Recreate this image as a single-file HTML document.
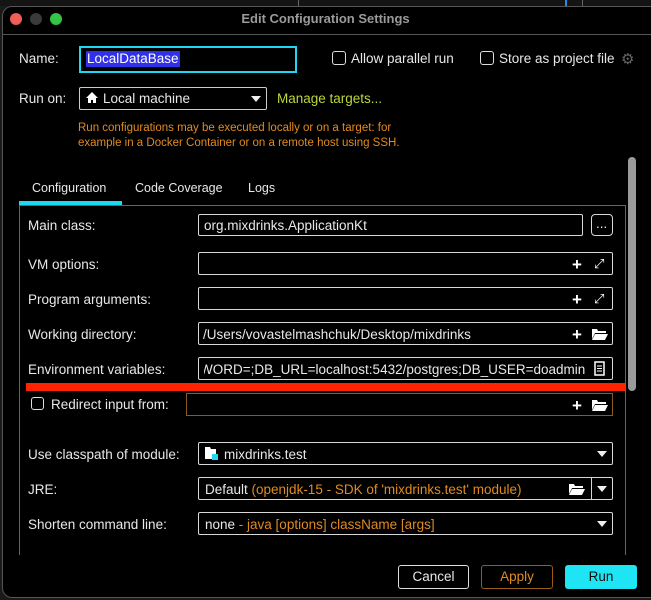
<!DOCTYPE html>
<html><head><meta charset="utf-8"><style>
*{box-sizing:border-box;margin:0;padding:0}
body{width:651px;height:600px;background:#1a1a1a;position:relative;overflow:hidden;font-family:"Liberation Sans",Arial,sans-serif;font-size:13.5px;color:#e8e8e8}
.a{position:absolute;white-space:nowrap}
.win{position:absolute;left:2px;top:6px;width:660px;height:592px;background:#000;border:1px solid #555;border-radius:10px}
.box{position:absolute;border:1px solid #d8d8d8;border-radius:2px}
.lbl{position:absolute;left:28px;white-space:nowrap}
.plus{position:absolute;font-size:17px;font-weight:bold;color:#fff;line-height:1}
.cb{position:absolute;width:14px;height:14px;border:1px solid #ddd;border-radius:3px}
.tri{position:absolute;width:0;height:0;border-left:5px solid transparent;border-right:5px solid transparent;border-top:6px solid #eee}
.or{color:#e08a20}
</style></head><body>
<div class="a" style="left:0;top:0;width:651px;height:6px;background:#141414"></div>
<div class="a" style="left:298px;top:0;width:1px;height:6px;background:#666"></div>
<div class="a" style="left:565px;top:0;width:2px;height:6px;background:#2a8ae0"></div>
<div class="a" style="left:582px;top:0;width:1px;height:6px;background:#666"></div>
<div class="win"></div>
<div class="a" style="left:10px;top:13px;width:12px;height:12px;border-radius:50%;background:#ed5f57"></div>
<div class="a" style="left:30px;top:13px;width:12px;height:12px;border-radius:50%;background:#3a3a3a"></div>
<div class="a" style="left:50px;top:13px;width:12px;height:12px;border-radius:50%;background:#36c448"></div>
<div class="a" style="left:0;top:11px;width:651px;text-align:center;font-weight:bold;color:#9a9a9a;font-size:13px">Edit Configuration Settings</div>
<div class="a" style="left:3px;top:34px;width:648px;height:1px;background:#555"></div>

<div class="a" style="left:19px;top:51px">Name:</div>
<div class="a" style="left:79px;top:46px;width:218px;height:27px;border:2px solid #1ed8f0"></div>
<div class="a" style="left:86px;top:51px;height:16px;background:#3030e8;padding:0 1px;line-height:16px;color:#fff">LocalDataBase</div>
<div class="cb" style="left:332px;top:51px"></div>
<div class="a" style="left:351px;top:51px">Allow parallel run</div>
<div class="cb" style="left:480px;top:51px"></div>
<div class="a" style="left:499px;top:51px">Store as project file</div>
<div class="a" style="left:621px;top:50px;color:#666;font-size:15px">⚙</div>

<div class="a" style="left:19px;top:91px">Run on:</div>
<div class="box" style="left:79px;top:87px;width:188px;height:23px;border-color:#ccc"></div>
<svg class="a" style="left:86px;top:92px" width="12" height="11"><path d="M6 0L0 6h2v5h3V8h2v3h3V6h2z" fill="#fff"/></svg>
<div class="a" style="left:103px;top:91px">Local machine</div>
<div class="tri" style="left:251px;top:96px"></div>
<div class="a" style="left:277px;top:91px;color:#bcd63a">Manage targets...</div>
<div class="a" style="left:78px;top:121px;font-size:11.5px;line-height:14.5px;color:#e08a20">Run configurations may be executed locally or on a target: for<br>example in a Docker Container or on a remote host using SSH.</div>

<div class="a" style="left:628px;top:157px;width:8px;height:234px;border-radius:4px;background:#9a9a9a"></div>

<div class="a" style="left:32px;top:181px;font-size:12.5px">Configuration</div>
<div class="a" style="left:135px;top:181px;font-size:12.5px">Code Coverage</div>
<div class="a" style="left:248px;top:181px;font-size:12.5px">Logs</div>
<div class="a" style="left:19px;top:201px;width:103px;height:4px;background:#1ed8f0"></div>
<div class="a" style="left:19px;top:205px;width:607px;height:350px;border:1px solid #666;border-bottom:none"></div>

<div class="lbl" style="top:218px">Main class:</div>
<div class="box" style="left:198px;top:214px;width:385px;height:22px"></div>
<div class="a" style="left:204px;top:218px">org.mixdrinks.ApplicationKt</div>
<div class="box" style="left:591px;top:214px;width:22px;height:22px;border-radius:4px"></div>
<div class="a" style="left:596px;top:216px">...</div>

<div class="lbl" style="top:257px">VM options:</div>
<div class="box" style="left:198px;top:252px;width:415px;height:23px"></div>
<div class="plus" style="left:572px;top:256px">+</div>
<div class="a" style="left:594px;top:256px;font-size:13px;color:#fff">⤢</div>

<div class="lbl" style="top:292px">Program arguments:</div>
<div class="box" style="left:198px;top:287px;width:415px;height:23px"></div>
<div class="plus" style="left:572px;top:291px">+</div>
<div class="a" style="left:594px;top:291px;font-size:13px;color:#fff">⤢</div>

<div class="lbl" style="top:327px">Working directory:</div>
<div class="box" style="left:198px;top:322px;width:415px;height:23px"></div>
<div class="a" style="left:203px;top:327px">/Users/vovastelmashchuk/Desktop/mixdrinks</div>
<div class="plus" style="left:572px;top:326px">+</div>
<svg class="a" style="left:592px;top:328px" width="16" height="12"><path d="M0 1h5l1 2h8v2H3L0 11z M3 6h13l-3 6H0z" fill="#fff"/></svg>

<div class="lbl" style="top:362px">Environment variables:</div>
<div class="box" style="left:198px;top:357px;width:415px;height:23px"></div>
<div class="a" style="left:204px;top:362px;width:382px;overflow:hidden"><span style="margin-left:-4px">WORD=;DB_URL=localhost:5432/postgres;DB_USER=doadmin</span></div>
<svg class="a" style="left:594px;top:361px" width="11" height="15"><rect x="1" y="1" width="9" height="13" fill="none" stroke="#fff" stroke-width="1.5"/><path d="M3 5h5M3 7.5h5M3 10h5" stroke="#fff"/></svg>

<div class="a" style="left:26px;top:383px;width:599px;height:8px;background:#ff2200"></div>

<div class="cb" style="left:31px;top:397px;width:13px;height:13px"></div>
<div class="a" style="left:51px;top:397px">Redirect input from:</div>
<div class="a" style="left:186px;top:393px;width:427px;height:23px;border:1px solid #8a5a20"></div>
<div class="plus" style="left:572px;top:397px">+</div>
<svg class="a" style="left:592px;top:399px" width="16" height="12"><path d="M0 1h5l1 2h8v2H3L0 11z M3 6h13l-3 6H0z" fill="#fff"/></svg>

<div class="lbl" style="top:447px">Use classpath of module:</div>
<div class="box" style="left:198px;top:442px;width:415px;height:23px"></div>
<svg class="a" style="left:205px;top:447px" width="14" height="14"><path d="M0 0h5l1 2h5v6H0z" fill="#fff"/><path d="M0 6h8v6H0z" fill="#fff"/><rect x="7" y="7" width="6" height="6" fill="#1ed8f0"/></svg>
<div class="a" style="left:224px;top:447px">mixdrinks.test</div>
<div class="tri" style="left:597px;top:451px"></div>

<div class="lbl" style="top:482px">JRE:</div>
<div class="box" style="left:198px;top:477px;width:415px;height:23px"></div>
<div class="a" style="left:591px;top:478px;width:1px;height:21px;background:#d8d8d8"></div>
<div class="a" style="left:205px;top:482px">Default <span class="or">(openjdk-15 - SDK of 'mixdrinks.test' module)</span></div>
<svg class="a" style="left:569px;top:483px" width="16" height="12"><path d="M0 1h5l1 2h8v2H3L0 11z M3 6h13l-3 6H0z" fill="#fff"/></svg>
<div class="tri" style="left:597px;top:486px"></div>

<div class="lbl" style="top:517px">Shorten command line:</div>
<div class="box" style="left:198px;top:512px;width:415px;height:23px"></div>
<div class="a" style="left:205px;top:517px">none <span class="or">- java [options] className [args]</span></div>
<div class="tri" style="left:597px;top:521px"></div>

<div class="a" style="left:398px;top:565px;width:71px;height:24px;border:1px solid #ddd;border-radius:3px;text-align:center;line-height:22px">Cancel</div>
<div class="a" style="left:481px;top:565px;width:72px;height:24px;border:1px solid #9a5a18;border-radius:3px;text-align:center;line-height:22px;color:#e08a20">Apply</div>
<div class="a" style="left:565px;top:565px;width:72px;height:24px;background:#1ee4f4;border-radius:3px;text-align:center;line-height:24px;color:#111">Run</div>
</body></html>
